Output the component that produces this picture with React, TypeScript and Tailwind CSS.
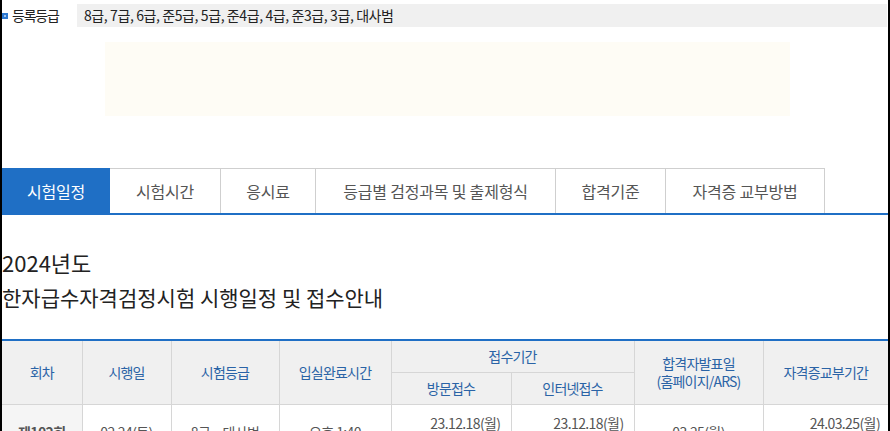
const tabs = [
  { label: '시험일정', w: 'w-[108px]', active: true },
  { label: '시험시간', w: 'w-[111px]' },
  { label: '응시료', w: 'w-[95px]' },
  { label: '등급별 검정과목 및 출제형식', w: 'w-[240px]' },
  { label: '합격기준', w: 'w-[110px]' },
  { label: '자격증 교부방법', w: 'w-[159px]' },
];

const th = 'border border-[#d6d6d6] bg-[#f0f0f0] font-normal text-[#2a63a6] text-[14px] tracking-[-0.8px] leading-[18px]';
const td = 'border border-[#d6d6d6] py-[9px] text-[14px] tracking-[-0.6px] leading-[18px] text-[#555]';

export default function App() {
  return (
    <div className="min-h-screen w-[890px] border-x-2 border-black bg-white font-['Noto_Sans_CJK_KR','Noto_Sans',sans-serif] text-[#222]">
      {/* 등록등급 */}
      <div className="flex items-center pt-[4px]">
        <span className="flex h-[6px] w-[6px] items-center justify-center bg-[#2d78d0]">
          <span className="h-[2px] w-[2px] bg-[#9cc3f0]" />
        </span>
        <span className="ml-[4px] w-[65px] text-[14px] leading-[23px] tracking-[-1.2px]">등록등급</span>
        <div className="mr-[1px] h-[23px] flex-1 bg-[#f0f0f0] pl-[7px] text-[14px] leading-[23px] tracking-[-0.4px]">
          8급, 7급, 6급, 준5급, 5급, 준4급, 4급, 준3급, 3급, 대사범
        </div>
      </div>

      {/* 배너 영역 */}
      <div className="ml-[103px] mt-[15px] h-[74px] w-[685px] bg-[#fefcf5]" />

      {/* 탭 */}
      <div className="mt-[52px] flex h-[47px] border-b-2 border-[#1f6fc5]">
        {tabs.map((t) => (
          <div
            key={t.label}
            className={`${t.w} flex items-center justify-center text-[16px] tracking-[-0.2px] ${
              t.active ? 'bg-[#1f6fc5] text-white' : 'border-r border-t border-[#cfcfcf] text-[#555]'
            }`}
          >
            {t.label}
          </div>
        ))}
      </div>

      {/* 제목 */}
      <h2 className="mt-[33px] text-[22px] font-normal leading-[28px]">2024년도</h2>
      <h3 className="mt-[6px] text-[21px] font-normal leading-[30px]">
        한자급수자격검정시험 시행일정 및 접수안내
      </h3>

      {/* 일정표 */}
      <table className="mt-[27px] w-[886px] table-fixed border-collapse border-t-2 border-[#1f6fc5] text-center">
        <colgroup>
          <col className="w-[80px]" />
          <col className="w-[89px]" />
          <col className="w-[108px]" />
          <col className="w-[112px]" />
          <col className="w-[120px]" />
          <col className="w-[123px]" />
          <col className="w-[129px]" />
          <col className="w-[125px]" />
        </colgroup>
        <thead>
          <tr className="h-[32px]">
            <th rowSpan={2} className={`${th} border-l-0`}>회차</th>
            <th rowSpan={2} className={th}>시행일</th>
            <th rowSpan={2} className={th}>시험등급</th>
            <th rowSpan={2} className={th}>입실완료시간</th>
            <th colSpan={2} className={th}>접수기간</th>
            <th rowSpan={2} className={th}>
              합격자발표일
              <br />
              (홈페이지/ARS)
            </th>
            <th rowSpan={2} className={`${th} border-r-0`}>자격증교부기간</th>
          </tr>
          <tr className="h-[32px]">
            <th className={th}>방문접수</th>
            <th className={th}>인터넷접수</th>
          </tr>
        </thead>
        <tbody>
          <tr>
            <th className={`${td} border-l-0 bg-[#f5f5f5] font-bold text-[#333]`}>제102회</th>
            <td className={td}>02.24(토)</td>
            <td className={td}>8급 ~ 대사범</td>
            <td className={td}>오후 1:40</td>
            <td className={`${td} pr-[10px] text-right`}>
              23.12.18(월)
              <br />
              ~ 24.01.19(금)
            </td>
            <td className={`${td} pr-[10px] text-right`}>
              23.12.18(월)
              <br />
              ~ 24.01.24(수)
            </td>
            <td className={td}>03.25(월)</td>
            <td className={`${td} border-r-0 pr-[8px] text-right`}>
              24.03.25(월)
              <br />
              ~ 24.04.12(금)
            </td>
          </tr>
        </tbody>
      </table>
    </div>
  );
}
